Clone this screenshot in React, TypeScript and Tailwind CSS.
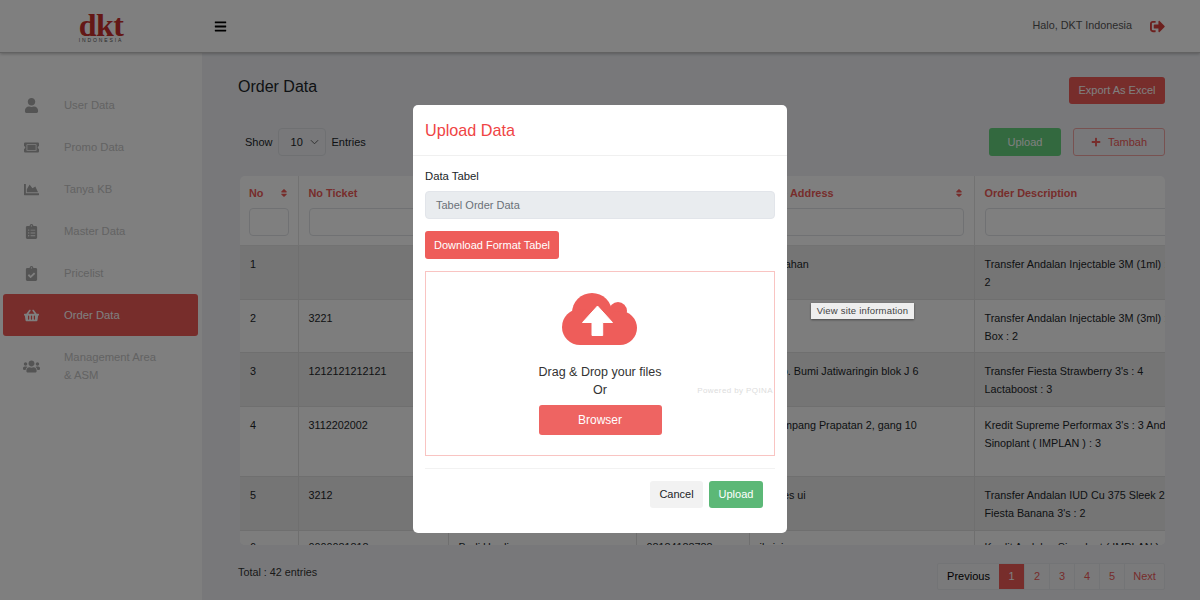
import React from 'react';
import {
  FaBars,
  FaChartArea,
  FaClipboardCheck,
  FaClipboardList,
  FaPlus,
  FaShoppingBasket,
  FaSignOutAlt,
  FaSort,
  FaTicketAlt,
  FaUser,
  FaUsers,
} from 'react-icons/fa';

const menuItems = [
  { label: 'User Data', icon: FaUser },
  { label: 'Promo Data', icon: FaTicketAlt },
  { label: 'Tanya KB', icon: FaChartArea },
  { label: 'Master Data', icon: FaClipboardList },
  { label: 'Pricelist', icon: FaClipboardCheck },
  { label: 'Order Data', icon: FaShoppingBasket, active: true },
];

const columns = [
  { title: 'No', width: 'w-[58px]' },
  { title: 'No Ticket', width: 'w-[150px]' },
  { title: 'Customer Name', width: 'w-[188px]' },
  { title: 'Phone', width: 'w-[113px]' },
  { title: 'Store Address', width: 'w-[225px]' },
  { title: 'Order Description', width: 'w-[300px]' },
];

const rows = [
  { no: '1', ticket: '', name: 'Andi', phone: '08123456789', address: 'Kelurahan', desc: ['Transfer Andalan Injectable 3M (1ml) :', '2'], height: 'h-[54px]' },
  { no: '2', ticket: '3221', name: 'Budi', phone: '08123456780', address: 'Solo', desc: ['Transfer Andalan Injectable 3M (3ml) :', 'Box : 2'], height: 'h-[53px]' },
  { no: '3', ticket: '1212121212121', name: 'Dewi', phone: '08123456781', address: 'Komp. Bumi Jatiwaringin blok J 6', desc: ["Transfer Fiesta Strawberry 3's : 4", 'Lactaboost : 3'], height: 'h-[54px]' },
  { no: '4', ticket: '3112202002', name: 'Rina', phone: '08123456782', address: 'Jl. Simpang Prapatan 2, gang 10', desc: ["Kredit Supreme Performax 3's : 3 And", 'Sinoplant ( IMPLAN ) : 3'], height: 'h-[70px]' },
  { no: '5', ticket: '3212', name: 'Sari', phone: '08123456783', address: 'test tes ui', desc: ['Transfer Andalan IUD Cu 375 Sleek 2', "Fiesta Banana 3's : 2"], height: 'h-[54px]' },
  { no: '6', ticket: '0000081818', name: 'Budi Hardi', phone: '08184188788', address: 'jl sini', desc: ['Kredit Andalan Sinoplant ( IMPLAN )'], height: 'h-[54px]' },
];

const pages = ['1', '2', '3', '4', '5'];

const UploadCloud = () => (
  <svg viewBox="0 0 76 52" className="h-[52px] w-[76px]" aria-hidden="true">
    <g fill="#ee5d5a">
      <circle cx="30" cy="20" r="20" />
      <circle cx="56" cy="18" r="9" />
      <circle cx="18" cy="34" r="18" />
      <circle cx="58" cy="35" r="17" />
      <rect x="18" y="24" width="40" height="28" />
    </g>
    <path d="M35.5 13 L20.5 29.5 H30 V42.5 H40.7 V29.5 H50.5 Z" fill="#fff" stroke="#fff" strokeWidth="1" strokeLinejoin="round" />
  </svg>
);

export default function App() {
  return (
    <div className="relative h-[600px] w-[1200px] overflow-hidden bg-[#f0f1f5] font-['Liberation_Sans',Arial,sans-serif] text-[11px] text-[#212529]">
      <header className="relative z-10 flex h-[53px] items-center border-b border-[#c4c4c4] bg-white shadow-[0_1px_3px_rgba(0,0,0,0.25)]">
        <div className="flex w-[202px] flex-col items-center">
          <span className="mt-[3px] font-['Liberation_Serif',serif] text-[32px] font-bold leading-[26px] tracking-[-0.5px] text-[#c8302c]">dkt</span>
          <span className="-mt-[1px] text-[5px] leading-[6px] tracking-[1.9px] text-[#555]">INDONESIA</span>
        </div>
        <FaBars className="ml-[12px] text-[13px] text-black" />
        <span className="mb-[2px] ml-auto text-[10.8px] text-[#555]">Halo, DKT Indonesia</span>
        <FaSignOutAlt className="ml-[18px] mr-[35px] text-[15px] text-[#d9403c]" />
      </header>

      <div className="flex h-[547px]">
        <aside className="flex w-[202px] shrink-0 flex-col bg-white pl-[3px] pr-[4px] pt-[31px] text-[11.25px] text-[#c6c6c6]">
          {menuItems.map((item) => (
            <div
              key={item.label}
              className={`flex h-[42px] items-center rounded-[3px] ${item.active ? 'bg-[#ee5a57] text-white' : ''}`}
            >
              <span className={`flex w-[61px] justify-center pr-[5px] ${item.active ? '' : 'text-[#a8a8a8]'}`}>
                <item.icon className="text-[15px]" />
              </span>
              <span>{item.label}</span>
            </div>
          ))}
          <div className="mt-[12px] flex items-center">
            <span className="flex w-[61px] justify-center pr-[5px] text-[#a8a8a8]">
              <FaUsers className="text-[17px]" />
            </span>
            <span className="leading-[18px]">
              Management Area
              <br />& ASM
            </span>
          </div>
        </aside>

        <main className="flex min-w-0 flex-1 flex-col pl-[36px] pr-[35px]">
          <div className="mt-[24px] flex items-start justify-between">
            <h1 className="text-[16px] leading-[20px] text-[#212529]">Order Data</h1>
            <button className="h-[27px] w-[96px] rounded-[3px] bg-[#ee5a57] text-white">Export As Excel</button>
          </div>

          <div className="mt-[24px] flex items-center pl-[7px]">
            <span>Show</span>
            <div className="ml-[5px] flex h-[28px] w-[48px] items-center justify-between rounded-[4px] border border-[#dfe1e5] bg-[#f0f1f5] pl-[12px] pr-[6px]">
              <span>10</span>
              <svg viewBox="0 0 10 6" className="h-[6px] w-[9px]" fill="none" stroke="#555" strokeWidth="1"><path d="M1 1l4 4 4-4" /></svg>
            </div>
            <span className="ml-[6px]">Entries</span>
            <button className="ml-auto h-[28px] w-[72px] rounded-[3px] bg-[#66d27e] text-white">Upload</button>
            <button className="ml-[12px] flex h-[28px] w-[92px] items-center justify-center gap-[7px] rounded-[3px] border border-[#f0a5a3] text-[#ee5a57]">
              <FaPlus className="text-[10px]" />
              Tambah
            </button>
          </div>

          <div className="ml-[2px] mt-[20px] h-[369px] overflow-hidden rounded-[5px] bg-white">
            <table className="w-[1034px] table-fixed border-collapse">
              <thead>
                <tr className="h-[69px]">
                  {columns.map((col, i) => (
                    <th key={col.title} className={`${col.width} border-b border-r border-[#e4e4e4] pt-[8px] text-left align-top ${i === 0 ? 'px-[9px]' : 'px-[10px]'}`}>
                      <div className="flex h-[18px] items-center justify-between text-[10.9px] font-bold text-[#ee5a57]">
                        {col.title}
                        {i !== 1 && i !== 5 && <FaSort className="text-[10px]" />}
                      </div>
                      <input
                        aria-label={col.title}
                        className="mt-[6px] block h-[28px] w-full rounded-[4px] border border-[#e0e2e6] bg-white"
                      />
                    </th>
                  ))}
                </tr>
              </thead>
              <tbody>
                {rows.map((row, i) => (
                  <tr key={row.no} className={`${row.height} ${i % 2 === 0 ? 'bg-[#ebebeb]' : 'bg-[#fafafa]'}`}>
                    {[row.no, row.ticket, row.name, row.phone, row.address].map((cell, c) => (
                      <td key={c} className={`overflow-hidden whitespace-nowrap border-b border-r border-[#dedede] px-[10px] align-top text-[10.8px] leading-[18px] ${i === 5 ? 'pt-[7px]' : 'pt-[9px]'}`}>
                        {cell}
                      </td>
                    ))}
                    <td className={`overflow-hidden whitespace-nowrap border-b border-[#dedede] px-[10px] align-top text-[10.8px] leading-[18px] ${i === 5 ? 'pt-[7px]' : 'pt-[9px]'}`}>
                      {row.desc.map((line) => (
                        <div key={line}>{line}</div>
                      ))}
                    </td>
                  </tr>
                ))}
              </tbody>
            </table>
          </div>

          <div className="mt-[18px] flex items-start justify-between">
            <span className="mt-[1px] text-[10.8px] leading-[16px] text-[#333]">Total : 42 entries</span>
            <nav className="flex h-[27px] items-stretch rounded-[2px] border border-[#e7e8ec] bg-[#f5f5f7] text-[#ee5a57]">
              <span className="flex w-[61px] items-center justify-center text-black">Previous</span>
              <span className="flex w-[25px] items-center justify-center bg-[#ee5a57] text-white">1</span>
              {pages.slice(1).map((page) => (
                <span key={page} className="flex w-[25px] items-center justify-center border-l border-[#e7e8ec]">{page}</span>
              ))}
              <span className="flex w-[40px] items-center justify-center border-l border-[#e7e8ec]">Next</span>
            </nav>
          </div>
        </main>
      </div>

      {/* modal backdrop sits over the whole page */}
      <div className="absolute inset-0 z-20 bg-black/50">
        <div className="absolute left-[413px] top-[105px] w-[374px] rounded-[5px] bg-white pb-[25px]">
          <div className="flex h-[51px] items-center border-b border-[#f0f0f0] px-[12px]">
            <h2 className="text-[16.2px] text-[#ef4444]">Upload Data</h2>
          </div>
          <div className="px-[12px] pt-[11px]">
            <label className="block text-[11.3px] leading-[18px] text-[#212529]">Data Tabel</label>
            <div className="mt-[6px] flex h-[28px] items-center rounded-[4px] border border-[#e2e5ea] bg-[#e9ecef] px-[10px] text-[#6b7178]">
              Tabel Order Data
            </div>
            <button className="mt-[12px] block h-[28px] w-[134px] rounded-[3px] bg-[#ee5d5a] text-white">Download Format Tabel</button>
            <div className="relative mt-[12px] flex h-[185px] flex-col items-center border border-[#f9c4c2] pt-[21px]">
              <UploadCloud />
              <p className="mt-[18px] text-[12.5px] leading-[18px] text-[#333]">Drag &amp; Drop your files</p>
              <p className="text-[12.5px] leading-[18px] text-[#333]">Or</p>
              <button className="mt-[6px] h-[30px] w-[123px] rounded-[3px] bg-[#ee6462] text-[12px] text-white">Browser</button>
              <span className="absolute right-[1px] top-[113px] text-[8px] tracking-[0.4px] text-[#ddd]">Powered by PQINA</span>
            </div>
            <div className="mt-[12px] border-t border-[#f2f2f2]" />
            <div className="mt-[12px] flex justify-end gap-[6px] pr-[12px]">
              <button className="h-[27px] w-[53px] rounded-[3px] bg-[#f2f2f2] text-[#212529]">Cancel</button>
              <button className="h-[27px] w-[54px] rounded-[3px] bg-[#5cb877] text-white">Upload</button>
            </div>
          </div>
        </div>
      </div>

      {/* browser tooltip captured in the shot */}
      <div className="absolute left-[811px] top-[303px] z-30 flex h-[16px] w-[103px] items-center justify-center bg-[#eeeeee] text-[9.5px] tracking-[0.2px] text-[#444] shadow-[0_1px_2px_rgba(0,0,0,0.4)]">
        View site information
      </div>
    </div>
  );
}
